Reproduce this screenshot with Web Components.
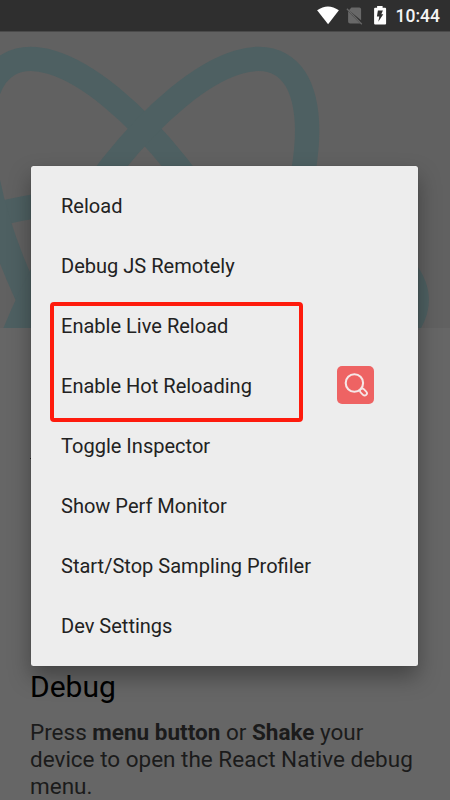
<!DOCTYPE html>
<html lang="en">
<head>
<meta charset="UTF-8">
<title>Developer menu</title>
<style>
    html, body {
        margin: 0;
        height: 100%;
        overflow: hidden;
        background: #666666;
        font-family: Roboto, sans-serif;
    }
</style>
</head>
<body>
<app-screen>
    <status-bar slot="status" time="10:44"></status-bar>
    <hero-header></hero-header>
    <section-rule></section-rule>
    <info-section heading="Debug">Press <b>menu button</b> or <b>Shake</b> your device to open the React Native debug menu.</info-section>
    <dev-menu slot="dialog">
        <menu-item>Reload</menu-item>
        <menu-item>Debug JS Remotely</menu-item>
        <menu-item>Enable Live Reload</menu-item>
        <menu-item>Enable Hot Reloading</menu-item>
        <menu-item>Toggle Inspector</menu-item>
        <menu-item>Show Perf Monitor</menu-item>
        <menu-item>Start/Stop Sampling Profiler</menu-item>
        <menu-item>Dev Settings</menu-item>
        <highlight-frame slot="overlay"></highlight-frame>
        <search-badge slot="overlay"></search-badge>
    </dev-menu>
</app-screen>

<script>
class AppScreen extends HTMLElement {
    constructor() {
        super();
        this.attachShadow({ mode: 'open' });
    }

    connectedCallback() {
        this.shadowRoot.innerHTML = `
            <style>
                :host {
                    display: flex;
                    flex-direction: column;
                    position: relative;
                    width: 450px;
                    height: 800px;
                    overflow: hidden;
                    background: #666666;
                }

                .dialog {
                    position: absolute;
                    top: 166px;
                    left: 31px;
                }
            </style>
            <slot name="status"></slot>
            <slot></slot>
            <div class="dialog"><slot name="dialog"></slot></div>
        `;
    }
}

class StatusBar extends HTMLElement {
    constructor() {
        super();
        this.attachShadow({ mode: 'open' });
    }

    connectedCallback() {
        const time = this.getAttribute('time') || '';

        this.shadowRoot.innerHTML = `
            <style>
                :host {
                    display: flex;
                    justify-content: flex-end;
                    flex: none;
                    box-sizing: border-box;
                    height: 32px;
                    padding-right: 10px;
                    background: #2f2f2f;
                    border-bottom: 1px solid #4a4a4a;
                    color: #f4f4f4;
                }

                svg {
                    display: block;
                }

                .time {
                    font-size: 17.5px;
                    font-weight: 500;
                    line-height: 33px;
                }
            </style>
            <svg width="79" height="31" viewBox="316.9 0 79 31">
                <path fill="#fff" d="M317 10.3Q327.8 2.7 338.8 10.3L328 24.2Z"/>
                <path fill="#686868" d="M351.3 7.5H359.2Q361 7.5 361 9.3V20.3L348.8 10.2ZM348 11.2L360 23.5H350Q348 23.5 348 21.5Z"/>
                <path fill="none" stroke="#686868" stroke-width="1.3" d="M346.8 8.7L361.7 24.2"/>
                <path fill="#fff" d="M377 6H382.5V7.7H385Q386 7.7 386 8.7V23.5Q386 24.5 385 24.5H375Q374 24.5 374 23.5V8.7Q374 7.7 375 7.7H377Z"/>
                <path fill="#2f2f2f" d="M377.8 10.5H382.8L381.2 14.2H383.2L378.2 21.7L379.2 16.5H376.8Z"/>
            </svg>
            <span class="time">${time}</span>
        `;
    }
}

class HeroHeader extends HTMLElement {
    constructor() {
        super();
        this.attachShadow({ mode: 'open' });
    }

    connectedCallback() {
        this.shadowRoot.innerHTML = `
            <style>
                :host {
                    display: block;
                    flex: none;
                    height: 296px;
                    background: #616161;
                }

                svg {
                    display: block;
                }
            </style>
            <svg width="450" height="296" viewBox="0 32 450 296">
                <g fill="none" stroke="#4e6062" stroke-width="24.4">
                    <ellipse cx="144.7" cy="300" rx="272" ry="102.5"/>
                    <ellipse cx="144.7" cy="300" rx="272" ry="102.5" transform="rotate(60 144.7 300)"/>
                    <ellipse cx="144.7" cy="300" rx="272" ry="102.5" transform="rotate(120 144.7 300)"/>
                </g>
            </svg>
        `;
    }
}

// divider between sections, its left end shows beside the dialog
class SectionRule extends HTMLElement {
    constructor() {
        super();
        this.attachShadow({ mode: 'open' });
    }

    connectedCallback() {
        this.shadowRoot.innerHTML = `
            <style>
                :host {
                    display: block;
                    flex: none;
                    height: 1px;
                    margin: 130px 40px 0 30px;
                    background: #222222;
                }
            </style>
        `;
    }
}

class InfoSection extends HTMLElement {
    constructor() {
        super();
        this.attachShadow({ mode: 'open' });
    }

    connectedCallback() {
        const heading = this.getAttribute('heading') || '';

        this.shadowRoot.innerHTML = `
            <style>
                :host {
                    display: block;
                    margin-top: auto;
                    padding: 0 30px;
                    color: #1b1b1b;
                }

                h2 {
                    margin: 0 0 15px;
                    font-size: 30px;
                    font-weight: 400;
                    line-height: 35px;
                    color: #000000;
                }

                p {
                    margin: 0;
                    font-size: 22.5px;
                    line-height: 27px;
                }
            </style>
            <h2>${heading}</h2>
            <p><slot></slot></p>
        `;
    }
}

class DevMenu extends HTMLElement {
    constructor() {
        super();
        this.attachShadow({ mode: 'open' });
    }

    connectedCallback() {
        this.shadowRoot.innerHTML = `
            <style>
                :host {
                    display: flex;
                    flex-direction: column;
                    position: relative;
                    box-sizing: border-box;
                    width: 387.4px;
                    height: 499.5px;
                    padding: 10px 30px;
                    border-radius: 2.5px;
                    background: #ededed;
                    box-shadow: 0 0 1px rgba(0, 0, 0, 0.3), 0 11px 22px rgba(0, 0, 0, 0.34);
                }
            </style>
            <slot></slot>
            <slot name="overlay"></slot>
        `;
    }
}

class MenuItem extends HTMLElement {
    constructor() {
        super();
        this.attachShadow({ mode: 'open' });
    }

    connectedCallback() {
        this.shadowRoot.innerHTML = `
            <style>
                :host {
                    display: flex;
                    align-items: center;
                    box-sizing: border-box;
                    height: 60px;
                    padding-top: 1px;
                    font-size: 20.05px;
                    color: #222222;
                    white-space: nowrap;
                }
            </style>
            <slot></slot>
        `;
    }
}

// red outline over the two reload entries
class HighlightFrame extends HTMLElement {
    constructor() {
        super();
        this.attachShadow({ mode: 'open' });
    }

    connectedCallback() {
        this.shadowRoot.innerHTML = `
            <style>
                :host {
                    display: block;
                    position: absolute;
                    top: 136px;
                    left: 19px;
                    box-sizing: border-box;
                    width: 253px;
                    height: 120px;
                    border: 4px solid #fe1b0d;
                    border-radius: 4px;
                }
            </style>
        `;
    }
}

class SearchBadge extends HTMLElement {
    constructor() {
        super();
        this.attachShadow({ mode: 'open' });
    }

    connectedCallback() {
        this.shadowRoot.innerHTML = `
            <style>
                :host {
                    display: block;
                    position: absolute;
                    top: 200px;
                    left: 305.6px;
                    width: 37.5px;
                    height: 37.5px;
                    border-radius: 5px;
                    background: #ee6363;
                }

                svg {
                    display: block;
                }
            </style>
            <svg width="37.5" height="37.5" viewBox="0 0 37.5 37.5" fill="none" stroke="#f6e7e7">
                <circle cx="17.4" cy="17" r="8.7" stroke-width="2.1"/>
                <rect x="-1" y="-2.3" width="8" height="4.6" rx="2.3" stroke-width="1.8" transform="translate(24.3 23.9) rotate(45)"/>
            </svg>
        `;
    }
}

customElements.define('app-screen', AppScreen);
customElements.define('status-bar', StatusBar);
customElements.define('hero-header', HeroHeader);
customElements.define('section-rule', SectionRule);
customElements.define('info-section', InfoSection);
customElements.define('dev-menu', DevMenu);
customElements.define('menu-item', MenuItem);
customElements.define('highlight-frame', HighlightFrame);
customElements.define('search-badge', SearchBadge);
</script>
</body>
</html>
